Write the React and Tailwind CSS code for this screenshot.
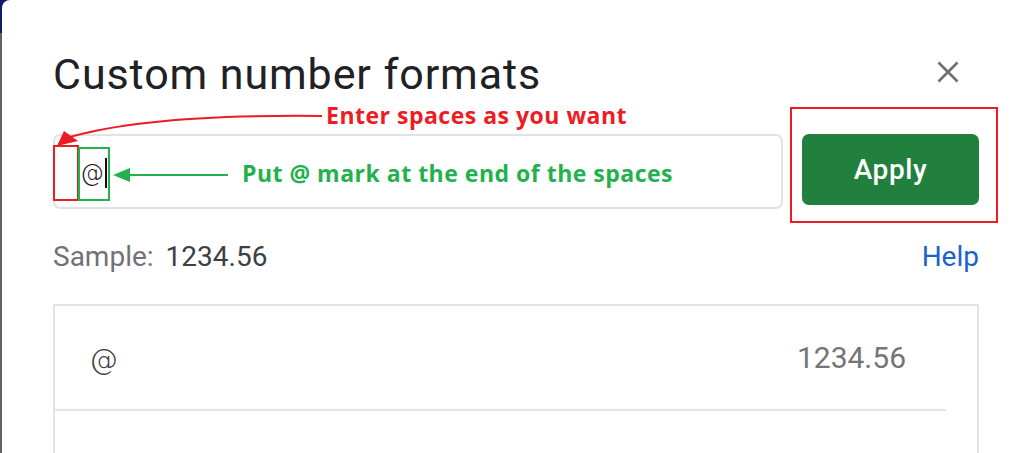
export default function App() {
  const roboto = { fontFamily: "Roboto, 'Liberation Sans', sans-serif" };
  return (
    <div className="relative w-[1022px] h-[453px] flex overflow-hidden bg-[#0d1a6b]" style={roboto}>
      <div className="w-[2px] flex flex-col">
        <div className="h-[33px]" />
        <div className="flex-1 bg-[#5f6368]" />
      </div>
      <div className="flex-1 bg-white rounded-tl-[8px] pl-[51px] pr-[43px] pt-[49px] flex flex-col">
        <div className="flex items-center justify-between h-[50px]">
          <h1 className="text-[43px] leading-[50px] text-[#202124] font-normal tracking-[0.9px] font-['Roboto',sans-serif]">
            Custom number formats
          </h1>
          <svg width="22" height="22" viewBox="0 0 22 22" className="mr-[20px] -mt-[4px]">
            <path d="M1.5 1.5 L20.5 20.5 M20.5 1.5 L1.5 20.5" stroke="#6b6e72" strokeWidth="2.6" />
          </svg>
        </div>

        <div className="mt-[35px] flex items-start gap-[19px]">
          <div className="relative w-[730px] h-[75px] border-2 border-[#e2e2e6] rounded-[7px] flex items-center pl-[25px]">
            <span className="text-[24px] leading-none text-[#202124] font-['DejaVu_Sans',sans-serif] font-light mt-[2px]">@</span>
            <span className="ml-[1px] w-[2px] h-[30px] bg-[#111] mt-[2px]" />
            <div className="absolute left-[-2px] top-[9px] w-[26px] h-[56px] border-2 border-[#ed1c24]" />
            <div className="absolute left-[23px] top-[11px] w-[32px] h-[54px] border-2 border-[#22b14c]" />
          </div>
          <div className="relative">
            <button className="w-[177px] h-[71px] bg-[#22803f] rounded-[7px] text-white text-[28px] font-medium tracking-[0.6px]">
              Apply
            </button>
            <div className="absolute left-[-12px] top-[-27px] w-[208px] h-[116px] border-2 border-[#ed1c24]" />
          </div>
        </div>

        <div className="mt-[32px] flex items-center justify-between leading-[32px] text-[28px]">
          <div className="flex gap-[12px]">
            <span className="text-[#6f7276]">Sample:</span>
            <span className="text-[#3c4043]">1234.56</span>
          </div>
          <span className="text-[#1a62d4]">Help</span>
        </div>

        <div className="mt-[31px] flex-1 border-2 border-b-0 border-[#e3e3e3]">
          <div className="h-[105px] mr-[31px] border-b-2 border-[#e3e3e3] flex items-center justify-between pl-[34px] pr-[40px]">
            <span className="text-[29px] text-[#3c4043] font-['DejaVu_Sans',sans-serif] font-light mt-[4px]">@</span>
            <span className="text-[30px] text-[#757575]">1234.56</span>
          </div>
        </div>
      </div>

      <svg className="absolute inset-0 pointer-events-none" width="1022" height="453" viewBox="0 0 1022 453">
        <path d="M322 116 Q150 114 70 137" fill="none" stroke="#ed1c24" strokeWidth="2" />
        <polygon points="57,146 64,131 78,141" fill="#ed1c24" />
        <line x1="228" y1="175" x2="128" y2="175" stroke="#22b14c" strokeWidth="2" />
        <polygon points="113,175 130,168 130,182" fill="#22b14c" />
      </svg>
      <div className="absolute left-[326px] top-[100px] text-[23px] leading-[30px] tracking-[0.5px] font-bold text-[#ed1c24] whitespace-nowrap font-['Open_Sans',sans-serif]">
        Enter spaces as you want
      </div>
      <div className="absolute left-[242px] top-[158px] text-[23px] leading-[30px] tracking-[0.5px] font-bold text-[#22b14c] whitespace-nowrap font-['Open_Sans',sans-serif]">
        Put @ mark at the end of the spaces
      </div>
    </div>
  );
}
